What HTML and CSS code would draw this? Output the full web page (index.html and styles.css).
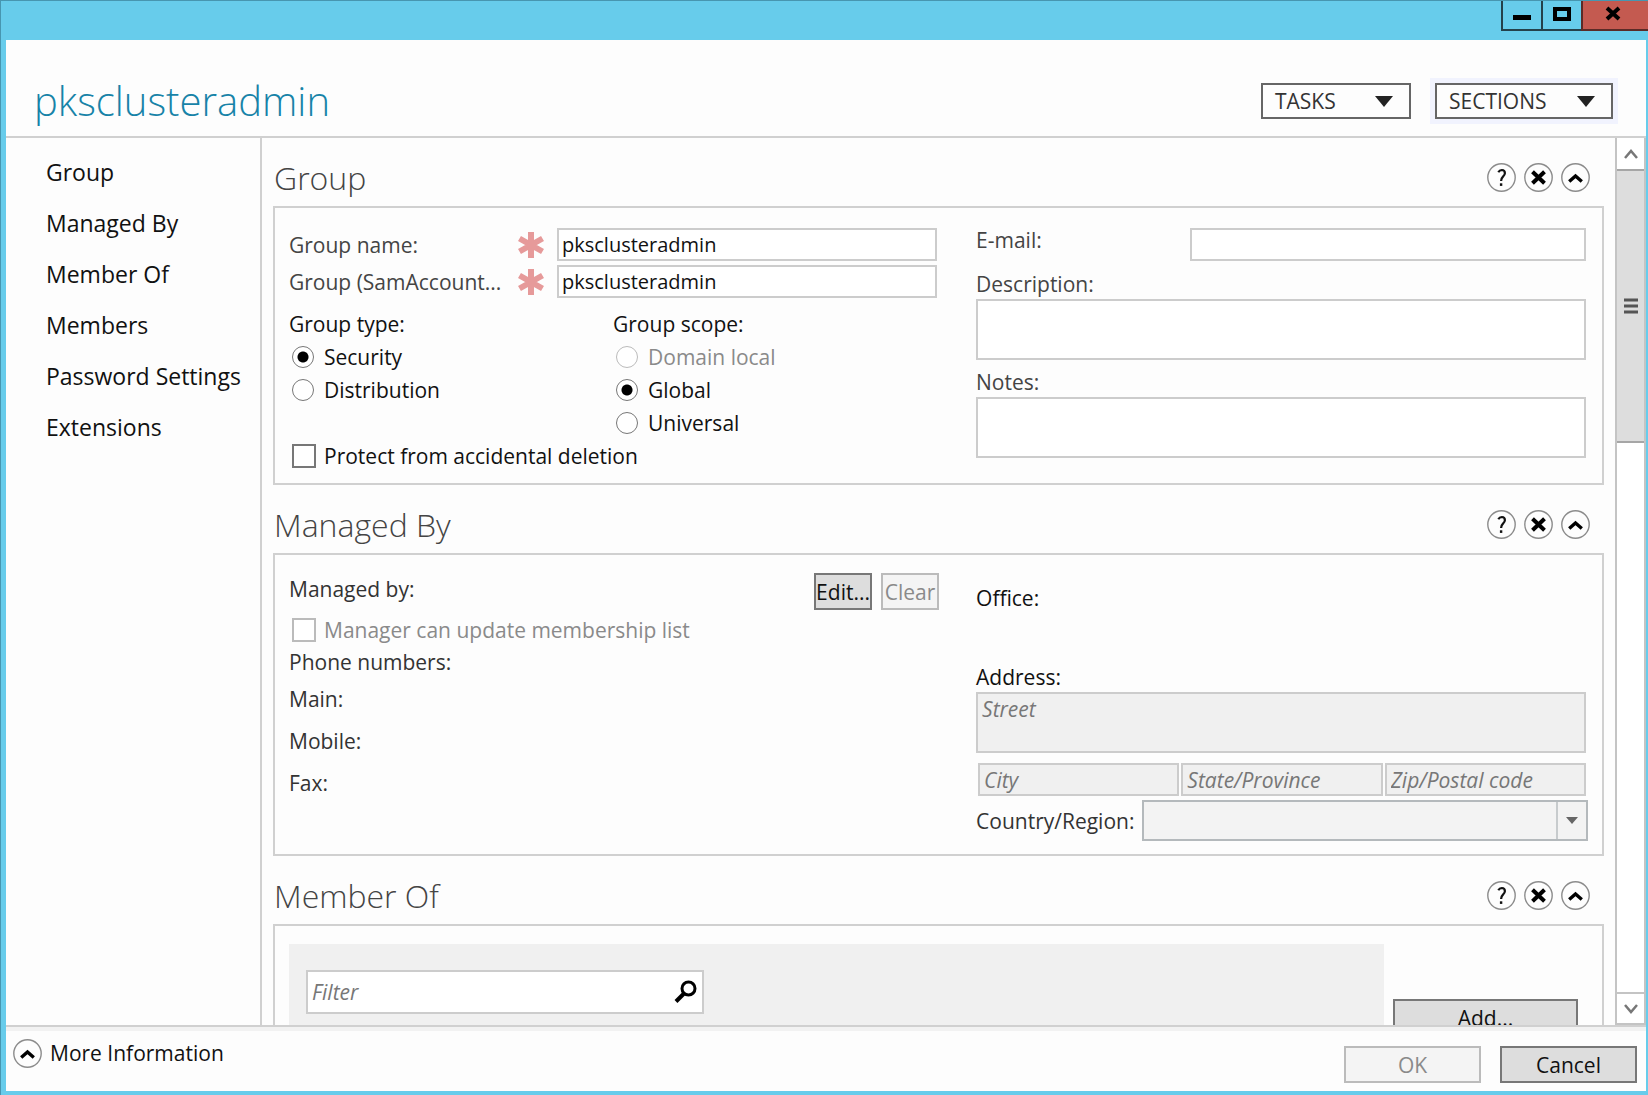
FILE: index.html
```html
<!DOCTYPE html>
<html lang="en">

<head>
    <meta charset="utf-8">
    <meta name="viewport" content="width=device-width,initial-scale=1" />
    <title>pksclusteradmin</title>
    <link rel="stylesheet" href="styles.css">
</head>

<body>
    <!-- shared icons -->
    <svg class="defs" aria-hidden="true">
        <symbol id="help" viewBox="0 0 29 29">
            <circle cx="14.5" cy="14.5" r="13.7" fill="#fdfdfd" stroke="#8c8c8c" stroke-width="1.4" />
            <path d="M11.3 9.2Q12.5 7 14.8 7Q18 7.2 17.9 10.2Q17.8 12 16 13.6Q14.3 15.2 14.1 18" fill="none" stroke="#111" stroke-width="2.2" />
            <rect x="12.9" y="20.3" width="2.4" height="2.6" fill="#111" />
        </symbol>
        <symbol id="remove" viewBox="0 0 29 29">
            <circle cx="14.5" cy="14.5" r="13.7" fill="#fdfdfd" stroke="#8c8c8c" stroke-width="1.4" />
            <path d="M8.5 8.7L20.5 20.3M20.5 8.7L8.5 20.3" fill="none" stroke="#000" stroke-width="4" />
        </symbol>
        <symbol id="collapse" viewBox="0 0 29 29">
            <circle cx="14.5" cy="14.5" r="13.7" fill="#fdfdfd" stroke="#8c8c8c" stroke-width="1.4" />
            <path d="M8.2 18.5L14.5 13L20.8 18.5" fill="none" stroke="#000" stroke-width="3.4" />
        </symbol>
        <symbol id="star" viewBox="0 0 26 26">
            <path d="M13 0V26M1.5 6.5L24.5 19.5M24.5 6.5L1.5 19.5" fill="none" stroke="#e69a9a" stroke-width="6" />
        </symbol>
    </svg>

    <div class="titlebar">
        <button class="win" aria-label="Minimize"><svg width="18" height="16"><rect y="10" width="18" height="5" /></svg></button>
        <button class="win" aria-label="Maximize"><svg width="18" height="16"><rect x="2" y="4" width="14" height="10" fill="none" stroke="#000" stroke-width="4" /></svg></button>
        <button class="win close" aria-label="Close"><svg width="16" height="16"><path d="M2 3L14 14M14 3L2 14" stroke="#000" stroke-width="4" /></svg></button>
    </div>

    <div class="window">
        <header class="header">
            <h1>pksclusteradmin</h1>
            <button class="drop">TASKS <svg width="18" height="11"><path d="M0 0H18L9 11Z" fill="#222" /></svg></button>
            <button class="drop focus">SECTIONS <svg width="18" height="11"><path d="M0 0H18L9 11Z" fill="#222" /></svg></button>
        </header>

        <div class="body">
            <nav class="nav">
                <a href="#group">Group</a>
                <a href="#managed">Managed By</a>
                <a href="#memberof">Member Of</a>
                <a href="#members">Members</a>
                <a href="#password">Password Settings</a>
                <a href="#extensions">Extensions</a>
            </nav>

            <main class="content">
                <section id="group">
                    <div class="head">
                        <h2>Group</h2>
                        <button class="round" aria-label="Help"><svg><use href="#help" /></svg></button>
                        <button class="round" aria-label="Remove"><svg><use href="#remove" /></svg></button>
                        <button class="round" aria-label="Collapse"><svg><use href="#collapse" /></svg></button>
                    </div>
                    <div class="box group">
                        <div>
                            <div class="field">
                                <label for="name">Group name:</label>
                                <svg class="star"><use href="#star" /></svg>
                                <input id="name" type="text" value="pksclusteradmin">
                            </div>
                            <div class="field">
                                <label for="sam">Group (SamAccount...</label>
                                <svg class="star"><use href="#star" /></svg>
                                <input id="sam" type="text" value="pksclusteradmin">
                            </div>
                            <div class="options">
                                <div role="radiogroup" aria-labelledby="gtype">
                                    <p id="gtype">Group type:</p>
                                    <label class="check"><input type="radio" name="type" checked>Security</label>
                                    <label class="check"><input type="radio" name="type">Distribution</label>
                                </div>
                                <div role="radiogroup" aria-labelledby="gscope">
                                    <p id="gscope">Group scope:</p>
                                    <label class="check off"><input type="radio" name="scope" disabled>Domain local</label>
                                    <label class="check"><input type="radio" name="scope" checked>Global</label>
                                    <label class="check"><input type="radio" name="scope">Universal</label>
                                </div>
                            </div>
                            <label class="check"><input type="checkbox">Protect from accidental deletion</label>
                        </div>
                        <div class="side">
                            <div class="email">
                                <label for="email">E-mail:</label>
                                <input id="email" type="text">
                            </div>
                            <label for="desc">Description:</label>
                            <textarea id="desc"></textarea>
                            <label for="notes">Notes:</label>
                            <textarea id="notes"></textarea>
                        </div>
                    </div>
                </section>

                <section id="managed">
                    <div class="head">
                        <h2>Managed By</h2>
                        <button class="round" aria-label="Help"><svg><use href="#help" /></svg></button>
                        <button class="round" aria-label="Remove"><svg><use href="#remove" /></svg></button>
                        <button class="round" aria-label="Collapse"><svg><use href="#collapse" /></svg></button>
                    </div>
                    <div class="box managed">
                        <div>
                            <div class="manager">
                                <span>Managed by:</span>
                                <button class="btn">Edit...</button>
                                <button class="btn" disabled>Clear</button>
                            </div>
                            <label class="check off"><input type="checkbox" disabled>Manager can update membership list</label>
                            <p class="phones">Phone numbers:</p>
                            <div class="numbers">
                                <span>Main:</span>
                                <span>Mobile:</span>
                                <span>Fax:</span>
                            </div>
                        </div>
                        <div class="side">
                            <p class="office">Office:</p>
                            <label class="dark" for="street">Address:</label>
                            <textarea id="street" placeholder="Street" disabled></textarea>
                            <div class="city">
                                <input type="text" placeholder="City" aria-label="City" disabled>
                                <input type="text" placeholder="State/Province" aria-label="State/Province" disabled>
                                <input type="text" placeholder="Zip/Postal code" aria-label="Zip/Postal code" disabled>
                            </div>
                            <div class="country">
                                <label for="country">Country/Region:</label>
                                <div class="select">
                                    <select id="country" disabled><option></option></select>
                                    <svg width="12" height="8"><path d="M0 0H12L6 7Z" fill="#666" /></svg>
                                </div>
                            </div>
                        </div>
                    </div>
                </section>

                <section id="memberof">
                    <div class="head">
                        <h2>Member Of</h2>
                        <button class="round" aria-label="Help"><svg><use href="#help" /></svg></button>
                        <button class="round" aria-label="Remove"><svg><use href="#remove" /></svg></button>
                        <button class="round" aria-label="Collapse"><svg><use href="#collapse" /></svg></button>
                    </div>
                    <div class="box members">
                        <div class="list">
                            <div class="filter">
                                <input type="text" placeholder="Filter" aria-label="Filter">
                                <svg width="24" height="24"><circle cx="14.5" cy="8.5" r="6.5" fill="none" stroke="#000" stroke-width="3" /><path d="M10 13.5L2 21.5" stroke="#000" stroke-width="4" /></svg>
                            </div>
                        </div>
                        <button class="btn">Add...</button>
                    </div>
                </section>
            </main>

            <div class="scroll">
                <button aria-label="Scroll up"><svg width="16" height="12"><path d="M2 10L8 3L14 10" fill="none" stroke="#777" stroke-width="2.5" /></svg></button>
                <div class="track">
                    <div class="thumb"><svg width="14" height="16"><path d="M0 2H14M0 8H14M0 14H14" stroke="#555" stroke-width="3" /></svg></div>
                </div>
                <button class="down" aria-label="Scroll down"><svg width="16" height="12"><path d="M2 2L8 9L14 2" fill="none" stroke="#777" stroke-width="2.5" /></svg></button>
            </div>
        </div>

        <footer class="footer">
            <button class="more"><svg><use href="#collapse" /></svg>More Information</button>
            <button class="btn" disabled>OK</button>
            <button class="btn">Cancel</button>
        </footer>
    </div>
</body>

</html>
```
FILE: styles.css
```css
* {
    box-sizing: border-box;
}

body {
    display: flex;
    flex-direction: column;
    height: 100vh;
    margin: 0;
    padding: 0 2px 4px 5px;
    overflow: hidden;
    border-top: 1px solid #4796b0;
    border-left: 1px solid #4796b0;
    background: #67cceb;
    color: #111;
    font-family: "Open Sans", "Noto Sans", sans-serif;
    font-size: 21px;
    line-height: 24px;
}

h1,
h2,
p {
    margin: 0;
    font-weight: normal;
}

button,
input,
select,
textarea {
    margin: 0;
    color: inherit;
    font: inherit;
}

button {
    padding: 0;
    border: 0;
    background: none;
}

a {
    color: inherit;
    text-decoration: none;
}

.defs {
    position: absolute;
    width: 0;
    height: 0;
}

/* window frame */
.titlebar {
    display: flex;
    flex: none;
    justify-content: flex-end;
    height: 39px;
    margin-right: -2px;
}

.win {
    display: flex;
    align-items: center;
    justify-content: center;
    width: 40px;
    height: 30px;
    padding-bottom: 4px;
    border: 1px solid #24414b;
    border-width: 0 0 2px 2px;
}

.close {
    width: 67px;
    padding-right: 6px;
    border-color: #5b2b27;
    background: #c45a50;
}

.window {
    display: flex;
    flex: 1;
    flex-direction: column;
    min-height: 0;
    background: #fdfdfd;
}

.header {
    display: flex;
    flex: none;
    align-items: center;
    gap: 24px;
    height: 98px;
    padding: 26px 33px 0 28px;
    border-bottom: 2px solid #d0d0d0;
}

h1 {
    flex: 1;
    color: #1783a8;
    font-size: 40px;
    font-weight: 300;
    line-height: 56px;
}

.drop {
    display: flex;
    align-items: center;
    justify-content: space-between;
    width: 150px;
    height: 36px;
    padding: 0 16px 0 12px;
    border: 2px solid #666;
    color: #333;
}

.focus {
    width: 178px;
    box-shadow: 0 0 0 5px #f1f3fe;
}

.body {
    display: flex;
    flex: 1;
    min-height: 0;
}

.nav {
    display: flex;
    flex: none;
    flex-direction: column;
    gap: 27px;
    width: 256px;
    padding: 22px 0 0 40px;
    border-right: 2px solid #d0d0d0;
    font-size: 23px;
}

.content {
    flex: 1;
    min-width: 0;
    padding: 0 11px;
    overflow: hidden;
}

/* sections */
.head {
    display: flex;
    align-items: center;
    gap: 8px;
    height: 68px;
    padding: 11px 14px 0 1px;
}

h2 {
    flex: 1;
    color: #444;
    font-size: 32px;
    font-weight: 300;
    line-height: 40px;
}

.round {
    width: 29px;
    height: 29px;
}

.round svg,
.more svg {
    display: block;
    width: 29px;
    height: 29px;
}

.box {
    display: grid;
    grid-template-columns: 17fr 16fr;
    gap: 39px;
    padding: 20px 16px 11px 14px;
    border: 2px solid #d0d0d0;
}

input[type="text"],
textarea {
    display: block;
    width: 100%;
    min-width: 0;
    height: 33px;
    padding: 0 4px;
    border: 2px solid #ccc;
    border-radius: 0;
    background: #fff;
}

textarea {
    height: 61px;
    margin: 3px 0 10px;
    padding-top: 3px;
    resize: none;
}

input[type="text"]:disabled,
textarea:disabled {
    background: #f0f0f0;
}

::placeholder {
    color: #777;
    font-style: italic;
    opacity: 1;
}

.field {
    display: grid;
    grid-template-columns: 229px 39px 1fr;
    align-items: center;
    margin-bottom: 4px;
    color: #444;
}

.field input[type="text"] {
    padding: 0 3px;
    color: #111;
    font-size: 20px;
}

.star {
    width: 26px;
    height: 26px;
}

.options {
    display: grid;
    grid-template-columns: 1fr 1fr;
    padding-top: 10px;
}

.options p {
    margin-bottom: 4px;
}

.check {
    display: flex;
    align-items: center;
    height: 33px;
}

.check input {
    flex: none;
    width: 22px;
    height: 22px;
    margin: 0 10px 0 3px;
    border: 2px solid #777;
    background: #fff;
    appearance: none;
}

.check input[type="radio"] {
    border-width: 1px;
    border-radius: 50%;
}

.check input[type="radio"]:checked {
    background: radial-gradient(circle, #000 5px, #fff 6px);
}

.check input[type="checkbox"] {
    width: 24px;
    height: 24px;
    margin-right: 8px;
}

.check input:disabled {
    border-color: #bbb;
}

.off {
    color: #8a8a8a;
}

.side > label {
    display: block;
    color: #444;
}

.side > .dark {
    color: #111;
}

.email {
    display: grid;
    grid-template-columns: 214px 1fr;
    margin-bottom: 11px;
    color: #444;
}

/* managed by */
.managed {
    padding-top: 18px;
    padding-bottom: 13px;
}

.manager {
    display: flex;
    gap: 9px;
    margin: 0 -2px 3px 0;
    color: #333;
}

.manager span {
    flex: 1;
    padding-top: 4px;
}

.btn {
    height: 37px;
    border: 2px solid #777;
    background: #ddd;
    color: #111;
}

.btn:disabled {
    border-color: #bbb;
    background: #f4f4f4;
    color: #8a8a8a;
}

.manager .btn {
    width: 58px;
}

.phones,
.numbers {
    padding-top: 4px;
    color: #333;
}

.numbers {
    display: grid;
    gap: 18px;
    padding-top: 13px;
}

.office {
    padding: 13px 0 55px;
}

.city {
    display: grid;
    grid-template-columns: 1fr 1fr 1fr;
    gap: 2px;
    padding-left: 2px;
}

.country {
    display: flex;
    gap: 8px;
    margin: 4px -2px 0 0;
    color: #333;
}

.country label {
    padding-top: 9px;
}

.select {
    display: grid;
    flex: 1;
    grid-template-columns: 1fr 28px;
    align-items: center;
    justify-items: center;
    border: 2px solid #b4b9bc;
    background: #f3f3f3;
}

.select select {
    width: 100%;
    height: 37px;
    border: 0;
    border-right: 2px solid #b4b9bc;
    border-radius: 0;
    background: none;
    appearance: none;
}

/* member of */
.members {
    grid-template-columns: 1fr 185px;
    gap: 9px;
    height: 320px;
    padding: 18px 24px 0 14px;
}

.members .btn {
    margin-top: 55px;
}

.list {
    padding: 26px 17px;
    background: #f0f0f0;
}

.filter {
    display: flex;
    align-items: center;
    width: 398px;
    height: 44px;
    padding-right: 4px;
    border: 2px solid #ccc;
    background: #fff;
}

.filter input[type="text"] {
    flex: 1;
    border: 0;
}

.scroll {
    display: flex;
    flex: none;
    flex-direction: column;
    width: 31px;
    border: 2px solid #c4c4c4;
    border-top: 0;
    background: #fff;
}

.scroll button {
    display: flex;
    flex: none;
    align-items: center;
    justify-content: center;
    height: 31px;
}

.scroll .down {
    border-top: 2px solid #c4c4c4;
}

.track {
    flex: 1;
}

.thumb {
    display: flex;
    align-items: center;
    justify-content: center;
    height: calc(100% / 3);
    border: 2px solid #a6a6a6;
    border-width: 2px 0;
    background: #ddd;
}

.footer {
    display: flex;
    flex: none;
    gap: 19px;
    height: 66px;
    padding: 14px 9px 0 7px;
    border-top: 2px solid #d0d0d0;
    box-shadow: inset 0 4px #f2f2f2;
}

.footer .btn {
    width: 137px;
    margin-top: 5px;
}

.more {
    display: flex;
    align-items: center;
    gap: 8px;
    height: 24px;
    margin-right: auto;
}
```
